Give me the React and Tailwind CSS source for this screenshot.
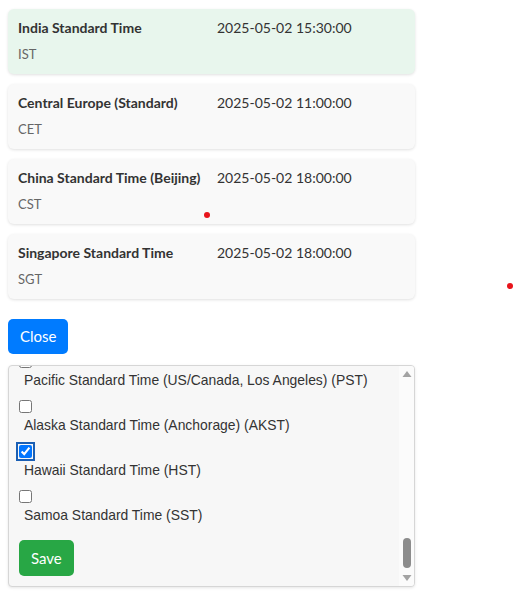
import React, { useEffect, useRef } from 'react';

const zones = [
  { name: 'India Standard Time', abbr: 'IST', time: '2025-05-02 15:30:00', home: true },
  { name: 'Central Europe (Standard)', abbr: 'CET', time: '2025-05-02 11:00:00' },
  { name: 'China Standard Time (Beijing)', abbr: 'CST', time: '2025-05-02 18:00:00' },
  { name: 'Singapore Standard Time', abbr: 'SGT', time: '2025-05-02 18:00:00' },
];

const options = [
  'Coordinated Universal Time (UTC)',
  'Greenwich Mean Time (GMT)',
  'Western European Time (WET)',
  'Central European Time (CET)',
  'Eastern European Time (EET)',
  'Moscow Standard Time (MSK)',
  'Gulf Standard Time (GST)',
  'Pakistan Standard Time (PKT)',
  'India Standard Time (IST)',
  'Nepal Time (NPT)',
  'Bangladesh Standard Time (BST)',
  'Indochina Time (ICT)',
  'China Standard Time (Beijing) (CST)',
  'Singapore Standard Time (SGT)',
  'Japan Standard Time (JST)',
  'Korea Standard Time (KST)',
  'Australian Western Standard Time (AWST)',
  'Australian Central Standard Time (ACST)',
  'Australian Eastern Standard Time (AEST)',
  'New Zealand Standard Time (NZST)',
  'Brasilia Time (BRT)',
  'Argentina Time (ART)',
  'Atlantic Standard Time (AST)',
  'Eastern Standard Time (US/Canada, New York) (EST)',
  'Central Standard Time (US/Canada, Chicago) (CST)',
  'Mountain Standard Time (US/Canada, Denver) (MST)',
  'Pacific Standard Time (US/Canada, Los Angeles) (PST)',
  'Alaska Standard Time (Anchorage) (AKST)',
  'Hawaii Standard Time (HST)',
  'Samoa Standard Time (SST)',
];

const ZoneCard = ({ zone }) => (
  <div
    className={`rounded-md px-[10px] pt-[10px] h-[65px] shadow-[0_1px_3px_rgba(0,0,0,0.12)] ${
      zone.home ? 'bg-[#e8f6ed]' : 'bg-[#f9f9f9]'
    }`}
  >
    <div className="flex text-[14px] leading-[18px] text-[#333]">
      <span className="w-[199px] font-bold">{zone.name}</span>
      <span>{zone.time}</span>
    </div>
    <div className="mt-[9px] text-[13px] leading-[16px] text-[#666]">{zone.abbr}</div>
  </div>
);

// classic scrollbar drawn beside the list
const ScrollBar = () => (
  <div className="w-[15px] flex flex-col items-center bg-[#fbfbfb] py-[4px]">
    <svg width="10" height="8" viewBox="0 0 10 8">
      <path d="M5 1 L9.5 7 L0.5 7 Z" fill="#a3a3a3" />
    </svg>
    <div className="flex-1 w-full flex flex-col justify-end items-center pb-[6px]">
      <div className="w-[8px] h-[30px] rounded-full bg-[#8c8c8c]" />
    </div>
    <svg width="10" height="8" viewBox="0 0 10 8">
      <path d="M0.5 1 L9.5 1 L5 7 Z" fill="#a3a3a3" />
    </svg>
  </div>
);

export default function App() {
  const listRef = useRef(null);

  useEffect(() => {
    if (listRef.current) listRef.current.scrollTop = listRef.current.scrollHeight;
  }, []);

  return (
    <div className="relative w-[513px] h-[594px] bg-white p-2 pt-[9px] font-['Lato',sans-serif]">
      <div className="w-[407px] flex flex-col gap-[10px]">
        {zones.map((z) => (
          <ZoneCard key={z.abbr} zone={z} />
        ))}
      </div>

      <button className="mt-[20px] h-[35px] px-3 rounded-[5px] bg-[#007bff] text-white text-[15px]">
        Close
      </button>

      <div className="mt-[11px] w-[407px] h-[222px] flex rounded-[4px] border border-[#d6d6d6] bg-[#f7f7f7] shadow-[0_1px_3px_rgba(0,0,0,0.1)] overflow-hidden">
        <div ref={listRef} className="flex-1 overflow-hidden px-[10px] pt-[10px] pb-[10px]">
          {options.map((label) => {
            const checked = label === 'Hawaii Standard Time (HST)';
            return (
              <div key={label} className="mb-[12px]">
                <input
                  type="checkbox"
                  checked={checked}
                  readOnly
                  className={`block m-0 w-[13px] h-[13px] accent-[#0075ff] ${
                    checked ? 'outline-2 outline-[#1a5fb4] outline-offset-1' : ''
                  }`}
                />
                <label className="block mt-[4px] ml-[5px] text-[13.9px] leading-[16px] text-[#333] font-['Liberation_Sans',Arial,sans-serif]">
                  {label}
                </label>
              </div>
            );
          })}
          <button className="mt-[5px] h-[36px] px-3 rounded-[5px] bg-[#28a745] text-white text-[15px]">
            Save
          </button>
        </div>
        <ScrollBar />
      </div>

      <span className="absolute left-[204px] top-[212px] w-[6px] h-[6px] rounded-full bg-[#e8141b]" />
      <span className="absolute left-[507px] top-[283px] w-[6px] h-[6px] rounded-full bg-[#e8141b]" />
    </div>
  );
}
